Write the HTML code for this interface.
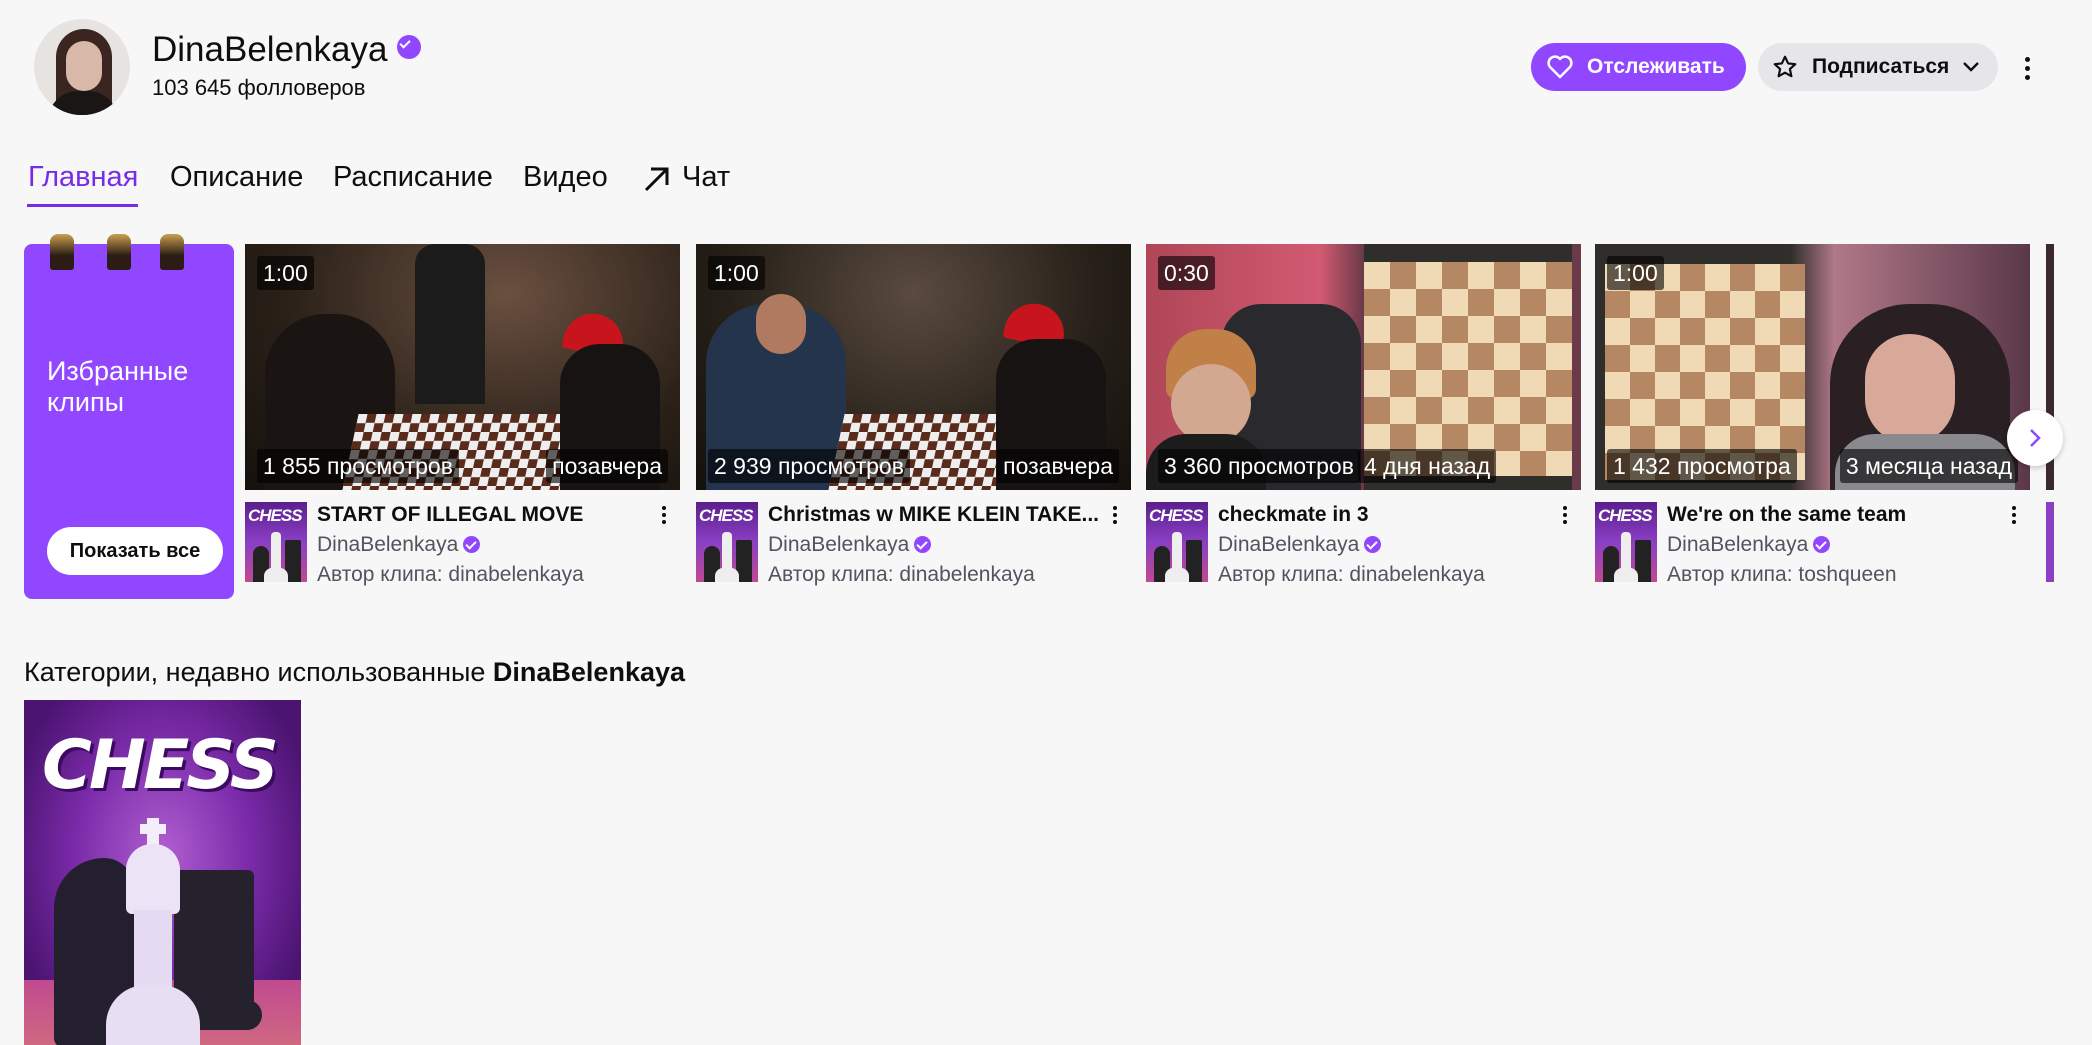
<!DOCTYPE html>
<html><head><meta charset="utf-8"><style>
*{box-sizing:border-box;margin:0;padding:0}
body{width:2092px;height:1045px;background:#f7f7f8;font-family:"Liberation Sans",sans-serif;color:#0e0e10;position:relative;overflow:hidden}
.a{position:absolute}
.tab{position:absolute;top:161px;font-size:29px;color:#0e0e10}
.thumb{position:absolute;top:244px;width:435px;height:246px;overflow:hidden;background:#222}
.lab{position:absolute;background:rgba(0,0,0,.6);color:#fff;font-size:23px;padding:3px 6px;border-radius:3px;line-height:28px}
.board{background-color:#f0d9b5;background-image:conic-gradient(#b58863 25%,transparent 0 50%,#b58863 0 75%,transparent 0);background-size:58px 58px}
.meta{position:absolute;top:502px}
.box{position:absolute;left:0;top:0;width:62px;height:80px;background:linear-gradient(180deg,#5a1f8c,#8a3fc4 50%,#c04a90);overflow:hidden}
.box span{position:absolute;left:3px;top:4px;font-size:17px;font-weight:bold;font-style:italic;color:#fff;letter-spacing:-1px}
.box .k{position:absolute;left:26px;top:30px;width:10px;height:46px;background:#eee;border-radius:4px 4px 0 0}
.box .kb{position:absolute;left:19px;top:66px;width:24px;height:14px;background:#eee;border-radius:8px 8px 0 0}
.box .n{position:absolute;left:8px;top:44px;width:16px;height:36px;background:#222;border-radius:8px 8px 0 0}
.box .r{position:absolute;left:40px;top:38px;width:16px;height:42px;background:#222;border-radius:2px 2px 0 0}
.t{position:absolute;left:72px;top:0;font-size:21px;font-weight:bold;white-space:nowrap;line-height:26px}
.s{position:absolute;left:72px;font-size:21px;color:#53535f;white-space:nowrap;line-height:26px}
.chk{display:inline-block;width:17px;height:17px;border-radius:50%;background:#9147ff;vertical-align:-2px;margin-left:5px;position:relative}
.chk:after{content:"";position:absolute;left:5px;top:3px;width:4px;height:8px;border:solid #fff;border-width:0 2px 2px 0;transform:rotate(45deg)}
.dots{position:absolute;right:14px;top:4px;width:4px}
.dots b{display:block;width:4px;height:4px;border-radius:50%;background:#0e0e10;margin-bottom:3px}
</style></head><body>

<div class="a" style="left:34px;top:19px;width:96px;height:96px;border-radius:50%;overflow:hidden;background:#e6e3e0">
<div class="a" style="left:22px;top:10px;width:56px;height:86px;background:#3a2520;border-radius:28px 28px 10px 10px"></div>
<div class="a" style="left:32px;top:22px;width:36px;height:50px;background:#d8b8a8;border-radius:18px"></div>
<div class="a" style="left:14px;top:72px;width:70px;height:30px;background:#1a1614;border-radius:30px 30px 0 0"></div></div>
<div class="a" style="left:152px;top:30px;font-size:35px;line-height:40px">DinaBelenkaya<span class="chk" style="width:24px;height:24px;margin-left:10px;vertical-align:2px"></span></div>
<div class="a" style="left:152px;top:75px;font-size:22px">103 645 фолловеров</div>

<div class="a" style="left:1531px;top:43px;width:215px;height:48px;border-radius:24px;background:#9147ff;color:#fff;font-weight:bold;font-size:21px;line-height:48px;padding-left:56px">Отслеживать</div>
<svg class="a" style="left:1547px;top:55px" width="26" height="24" viewBox="0 0 26 24"><path d="M13 22 L3 12 A6 6 0 0 1 13 4 A6 6 0 0 1 23 12 Z" fill="none" stroke="#fff" stroke-width="2.5" stroke-linejoin="round"/></svg>
<div class="a" style="left:1758px;top:43px;width:240px;height:48px;border-radius:24px;background:#e6e6ea;font-weight:bold;font-size:21px;line-height:48px;padding-left:54px">Подписаться</div>
<svg class="a" style="left:1772px;top:54px" width="26" height="26" viewBox="0 0 24 24"><path d="M12 2.5l2.9 6.2 6.6.7-5 4.5 1.4 6.6L12 17.2 6.1 20.5l1.4-6.6-5-4.5 6.6-.7z" fill="none" stroke="#0e0e10" stroke-width="2" stroke-linejoin="round"/></svg>
<svg class="a" style="left:1962px;top:60px" width="18" height="14" viewBox="0 0 18 14"><path d="M2 3l7 7 7-7" fill="none" stroke="#0e0e10" stroke-width="2.4"/></svg>
<div class="a" style="left:2025px;top:57px"><div style="width:5px;height:5px;border-radius:50%;background:#0e0e10;margin-bottom:4px"></div><div style="width:5px;height:5px;border-radius:50%;background:#0e0e10;margin-bottom:4px"></div><div style="width:5px;height:5px;border-radius:50%;background:#0e0e10"></div></div>

<div class="tab" style="left:28px;color:#772ce8">Главная</div>
<div class="a" style="left:27px;top:204px;width:111px;height:3px;background:#772ce8"></div>
<div class="tab" style="left:170px">Описание</div>
<div class="tab" style="left:333px">Расписание</div>
<div class="tab" style="left:523px">Видео</div>
<svg class="a" style="left:642px;top:165px" width="28" height="28" viewBox="0 0 28 28"><path d="M4 25L24 5M9 4h16v16" fill="none" stroke="#0e0e10" stroke-width="3"/></svg>
<div class="tab" style="left:682px">Чат</div>

<div class="a" style="left:24px;top:244px;width:210px;height:355px;background:#9147ff;border-radius:8px"></div>
<div class="a" style="left:50px;top:234px;width:24px;height:36px;border-radius:8px 8px 3px 3px;background:linear-gradient(#c9a050,#2b1d15 60%)"></div>
<div class="a" style="left:107px;top:234px;width:24px;height:36px;border-radius:8px 8px 3px 3px;background:linear-gradient(#c9a050,#2b1d15 60%)"></div>
<div class="a" style="left:160px;top:234px;width:24px;height:36px;border-radius:8px 8px 3px 3px;background:linear-gradient(#c9a050,#2b1d15 60%)"></div>
<div class="a" style="left:47px;top:356px;font-size:27px;color:#fff;line-height:31px">Избранные<br>клипы</div>
<div class="a" style="left:47px;top:527px;width:176px;height:48px;border-radius:24px;background:#fff;font-weight:bold;font-size:20px;line-height:48px;text-align:center">Показать все</div>

<div class="thumb" style="left:245px;background:radial-gradient(ellipse at 60% 20%,#6a5040,#2a2018 60%,#15110d)">
<div class="a" style="left:170px;top:0;width:70px;height:160px;background:#1b1b1b;border-radius:20px 20px 0 0"></div>
<div class="a" style="left:20px;top:70px;width:130px;height:176px;background:#1a1412;border-radius:60px 60px 0 0"></div>
<div class="a" style="left:105px;top:170px;width:230px;height:80px;background:repeating-conic-gradient(#5a2a1a 0 25%,#eee 0 50%) 0 0/18px 18px;transform:skewX(-12deg)"></div>
<div class="a" style="left:320px;top:70px;width:60px;height:40px;background:#c8151d;border-radius:30px 30px 4px 4px;transform:rotate(12deg)"></div>
<div class="a" style="left:315px;top:100px;width:100px;height:146px;background:#171313;border-radius:40px 40px 0 0"></div>
<div class="lab" style="left:12px;top:12px">1:00</div>
<div class="lab" style="left:12px;bottom:7px">1 855 просмотров</div>
<div class="lab" style="right:12px;bottom:7px">позавчера</div>
</div>
<div class="thumb" style="left:696px;background:radial-gradient(ellipse at 50% 20%,#5a4a40,#262018 60%,#14100c)">
<div class="a" style="left:10px;top:60px;width:140px;height:186px;background:#24344d;border-radius:60px 60px 0 0"></div>
<div class="a" style="left:60px;top:50px;width:50px;height:60px;background:#b07a60;border-radius:25px"></div>
<div class="a" style="left:140px;top:170px;width:200px;height:80px;background:repeating-conic-gradient(#5a2a1a 0 25%,#eee 0 50%) 0 0/18px 18px;transform:skewX(-12deg)"></div>
<div class="a" style="left:310px;top:60px;width:60px;height:40px;background:#c8151d;border-radius:30px 30px 4px 4px;transform:rotate(12deg)"></div>
<div class="a" style="left:300px;top:95px;width:110px;height:151px;background:#171313;border-radius:40px 40px 0 0"></div>
<div class="lab" style="left:12px;top:12px">1:00</div>
<div class="lab" style="left:12px;bottom:7px">2 939 просмотров</div>
<div class="lab" style="right:12px;bottom:7px">позавчера</div>
</div>
<div class="thumb" style="left:1146px;background:linear-gradient(90deg,#b04658,#d25a72 40%,#6a3a48 50%)">
<div class="a" style="left:75px;top:60px;width:140px;height:186px;background:#2a2a2e;border-radius:40px 40px 0 0"></div>
<div class="a" style="left:20px;top:85px;width:90px;height:70px;background:#c08048;border-radius:40px 40px 10px 10px"></div>
<div class="a" style="left:25px;top:120px;width:80px;height:80px;background:#d2a890;border-radius:40px"></div>
<div class="a" style="left:0;top:190px;width:120px;height:56px;background:#1c1c1c;border-radius:40px 40px 0 0"></div>
<div class="a board" style="left:218px;top:18px;width:208px;height:220px;background-size:52px 54px"></div>
<div class="a" style="left:218px;top:0;width:208px;height:18px;background:#302e2b"></div>
<div class="a" style="left:218px;top:232px;width:208px;height:14px;background:#302e2b"></div>
<div class="lab" style="left:12px;top:12px">0:30</div>
<div class="lab" style="left:12px;bottom:7px">3 360 просмотров</div>
<div class="lab" style="left:212px;bottom:7px">4 дня назад</div>
</div>
<div class="thumb" style="left:1595px;background:linear-gradient(90deg,#302e2b 45%,#b07888 55%,#5a3848)">
<div class="a board" style="left:10px;top:20px;width:200px;height:216px;background-size:50px 54px"></div>
<div class="a" style="left:235px;top:60px;width:180px;height:186px;background:#2a1f22;border-radius:80px 80px 0 0"></div>
<div class="a" style="left:270px;top:90px;width:90px;height:110px;background:#d8a898;border-radius:45px"></div>
<div class="a" style="left:240px;top:190px;width:180px;height:56px;background:#8a8a8e;border-radius:40px 40px 0 0"></div>
<div class="lab" style="left:12px;top:12px">1:00</div>
<div class="lab" style="left:12px;bottom:7px">1 432 просмотра</div>
<div class="lab" style="right:12px;bottom:7px">3 месяца назад</div>
</div>
<div class="a" style="left:2046px;top:244px;width:8px;height:246px;background:#3a2a30"></div>
<div class="a" style="left:2046px;top:502px;width:8px;height:80px;background:#8a3fc4"></div>
<div class="a" style="left:2007px;top:410px;width:56px;height:56px;border-radius:50%;background:#fff;box-shadow:0 2px 6px rgba(0,0,0,.2)"></div>
<svg class="a" style="left:2026px;top:427px" width="18" height="22" viewBox="0 0 18 22"><path d="M5 3l8 8-8 8" fill="none" stroke="#9147ff" stroke-width="2.5"/></svg>

<div class="meta" style="left:245px;width:435px"><div class="box"><span>CHESS</span><div class="n"></div><div class="r"></div><div class="k"></div><div class="kb"></div></div><div class="t">START OF ILLEGAL MOVE</div><div class="s" style="top:30px">DinaBelenkaya<span class="chk"></span></div><div class="s" style="top:60px">Автор клипа: dinabelenkaya</div><div class="dots"><b></b><b></b><b></b></div></div>
<div class="meta" style="left:696px;width:435px"><div class="box"><span>CHESS</span><div class="n"></div><div class="r"></div><div class="k"></div><div class="kb"></div></div><div class="t">Christmas w MIKE KLEIN TAKE...</div><div class="s" style="top:30px">DinaBelenkaya<span class="chk"></span></div><div class="s" style="top:60px">Автор клипа: dinabelenkaya</div><div class="dots"><b></b><b></b><b></b></div></div>
<div class="meta" style="left:1146px;width:435px"><div class="box"><span>CHESS</span><div class="n"></div><div class="r"></div><div class="k"></div><div class="kb"></div></div><div class="t">checkmate in 3</div><div class="s" style="top:30px">DinaBelenkaya<span class="chk"></span></div><div class="s" style="top:60px">Автор клипа: dinabelenkaya</div><div class="dots"><b></b><b></b><b></b></div></div>
<div class="meta" style="left:1595px;width:435px"><div class="box"><span>CHESS</span><div class="n"></div><div class="r"></div><div class="k"></div><div class="kb"></div></div><div class="t">We're on the same team</div><div class="s" style="top:30px">DinaBelenkaya<span class="chk"></span></div><div class="s" style="top:60px">Автор клипа: toshqueen</div><div class="dots"><b></b><b></b><b></b></div></div>

<div class="a" style="left:24px;top:657px;font-size:27px">Категории, недавно использованные <span style="font-weight:600">DinaBelenkaya</span></div>
<div class="a" style="left:24px;top:700px;width:277px;height:345px;overflow:hidden;background:radial-gradient(ellipse at 50% 45%,#b060d0,#7a2aa8 45%,#4a1470 80%)">
<div class="a" style="left:0;top:280px;width:277px;height:70px;background:linear-gradient(#c04a90,#d06a80)"></div>
<div class="a" style="left:18px;top:26px;font-size:68px;font-weight:bold;font-style:italic;color:#fff;letter-spacing:-3px;text-shadow:3px 3px 0 #3a0a60;font-family:'DejaVu Sans',sans-serif">CHESS</div>
<div class="a" style="left:30px;top:158px;width:80px;height:190px;background:#241f2e;border-radius:50px 30px 10px 10px"></div>
<div class="a" style="left:150px;top:170px;width:80px;height:160px;background:#25222e;border-radius:6px 6px 20px 20px"></div>
<div class="a" style="left:138px;top:300px;width:100px;height:30px;background:#25222e;border-radius:20px"></div>
<div class="a" style="left:123px;top:118px;width:12px;height:28px;background:#f4eefa"></div>
<div class="a" style="left:116px;top:124px;width:26px;height:10px;background:#f4eefa"></div>
<div class="a" style="left:102px;top:144px;width:54px;height:70px;background:#ece4f6;border-radius:26px 26px 6px 6px"></div>
<div class="a" style="left:110px;top:210px;width:38px;height:90px;background:#e4daf2"></div>
<div class="a" style="left:82px;top:285px;width:94px;height:70px;background:#e8def4;border-radius:40px 40px 0 0"></div>
</div>
</body></html>
